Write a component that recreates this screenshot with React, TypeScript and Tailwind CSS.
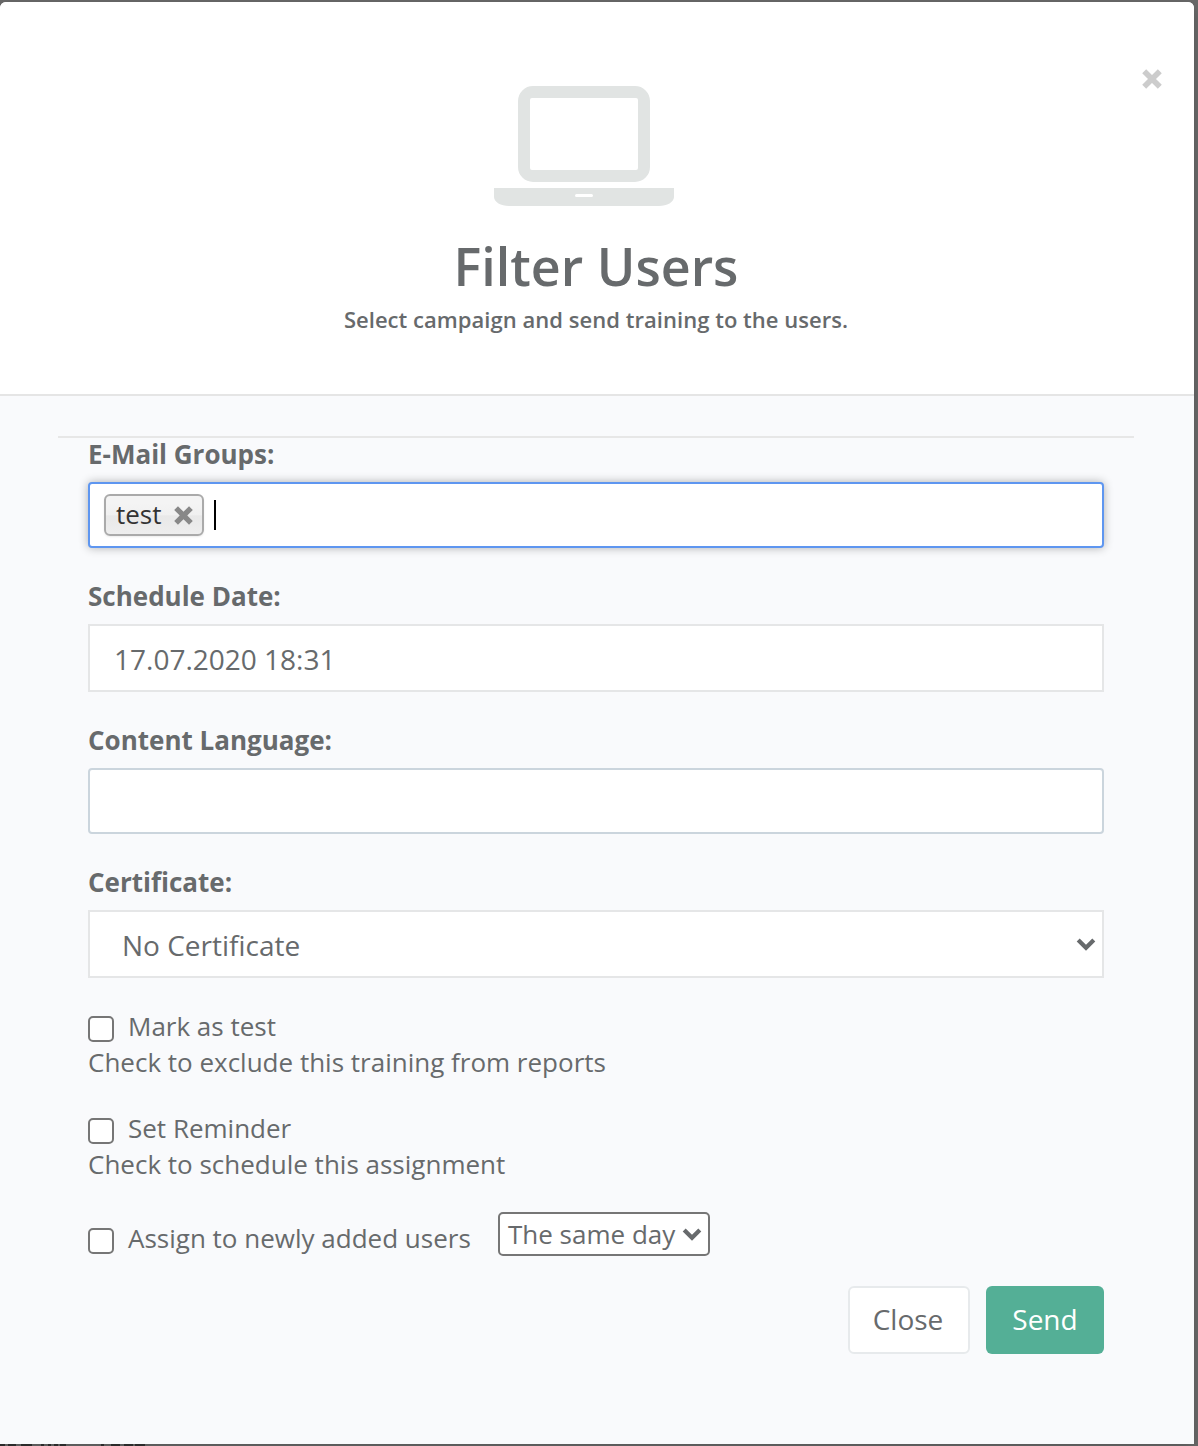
import type { ReactNode } from 'react';

function Cross({ className }: { className: string }) {
  return (
    <svg viewBox="0 0 20 20" className={className} fill="none" stroke="currentColor" strokeWidth="5.6">
      <path d="M2.2 2.2 17.8 17.8M17.8 2.2 2.2 17.8" />
    </svg>
  );
}

function Chevron() {
  return (
    <svg viewBox="0 0 20 14" className="h-[14px] w-5 shrink-0" fill="none" stroke="currentColor" strokeWidth="4.2">
      <path d="M2.2 2.9 10 10.7 17.8 2.9" />
    </svg>
  );
}

function Laptop() {
  return (
    <svg viewBox="0 0 180 120" className="h-[120px] w-[180px] text-[#e1e4e3]" fill="currentColor">
      <path
        fillRule="evenodd"
        d="M39 0H141A15 15 0 0 1 156 15V81A15 15 0 0 1 141 96H39A15 15 0 0 1 24 81V15A15 15 0 0 1 39 0ZM38 12A2 2 0 0 0 36 14V82A2 2 0 0 0 38 84H142A2 2 0 0 0 144 82V14A2 2 0 0 0 142 12Z"
      />
      <path
        fillRule="evenodd"
        d="M0 102H180V111C180 116 173 120 165 120H15C7 120 0 116 0 111ZM82.500 108A1.500 1.500 0 0 0 82.500 111H97.500A1.500 1.500 0 0 0 97.500 108Z"
      />
    </svg>
  );
}

function Label({ children, className }: { children: ReactNode; className: string }) {
  return <div className={`h-9 font-bold leading-9 ${className}`}>{children}</div>;
}

function CheckRow({ children }: { children: ReactNode }) {
  return (
    <label className="flex h-9 items-start leading-9">
      <span className="mt-2 mr-[14px] size-[26px] shrink-0 rounded-[5px] border-2 border-[#767676] bg-white" />
      {children}
    </label>
  );
}

const backdropMarks = [
  [0, 5], [8, 8], [21, 11], [41, 3], [48, 3], [54, 4], [60, 6],
  [101, 3], [111, 9], [124, 9], [135, 10],
];

export default function App() {
  return (
    <div className="relative h-[1446px] w-[1198px] overflow-hidden bg-[#6a6a6a] pt-[2px] font-['Open_Sans',sans-serif] text-[26px] text-[#676a6c]">
      <div className="h-[1442px] w-[1194px] overflow-hidden rounded-t-[6px] bg-[#f9fafc] shadow-[0_4px_16px_rgba(0,0,0,0.2)]">
        <header className="relative flex h-[394px] flex-col items-center border-b-2 border-[#e5e5e5] bg-white pt-[84px] pr-[2px]">
          <div className="-ml-6">
            <Laptop />
          </div>
          <h1 className="mt-[30px] h-[60px] text-[52px] leading-[60px] font-semibold">Filter Users</h1>
          <p className="mt-[7px] h-8 text-[22px] leading-8 font-semibold tracking-[0.035px]">Select campaign and send training to the users.</p>
          <button className="absolute top-[67px] right-[32px] text-[#cccccc]">
            <Cross className="size-5" />
          </button>
        </header>

        <main className="pt-10 pr-[60px] pl-[58px]">
          <hr className="border-t-2 border-[#e7e7e7]" />
          <div className="px-[30px]">
            <Label className="-mt-[2px]">E-Mail Groups:</Label>
            <div className="mt-[10px] flex h-[66px] items-center rounded-[4px] border-2 border-[#5e96f0] bg-white px-[14px] shadow-[0_0_10px_rgba(0,0,0,0.3)]">
              <span className="flex h-[42px] w-[100px] items-center justify-between rounded-[6px] border-2 border-[#aaaaaa] bg-[linear-gradient(#f4f4f4_20%,#f0f0f0_50%,#e8e8e8_52%,#eeeeee)] pr-[9.5px] pl-[10px] leading-9 text-[#333333] shadow-[0_1px_2px_rgba(0,0,0,0.08)]">
                <span className="-mt-[2px]">test</span>
                <Cross className="size-[19px] text-[#888888]" />
              </span>
              <span className="ml-[10px] h-[30px] w-[2px] bg-black" />
            </div>

            <Label className="mt-[30px]">Schedule Date:</Label>
            <div className="mt-[10px] flex h-[68px] items-center border-2 border-[#e5e6e7] bg-white px-6 pt-[2px] text-[28px]">
              17.07.2020 18:31
            </div>

            <Label className="mt-[30px]">Content Language:</Label>
            <div className="mt-[10px] h-[66px] rounded-[4px] border-2 border-[#cbd5dd] bg-white" />

            <Label className="mt-[30px]">Certificate:</Label>
            <div className="mt-[10px] flex h-[68px] items-center justify-between border-2 border-[#e5e6e7] bg-white pr-[6px] pl-8 text-[28px]">
              <span className="pt-[2px]">No Certificate</span>
              <Chevron />
            </div>

            <div className="mt-[30px]">
              <CheckRow>Mark as test</CheckRow>
              <p className="h-9 leading-9">Check to exclude this training from reports</p>
            </div>
            <div className="mt-[30px]">
              <CheckRow>Set Reminder</CheckRow>
              <p className="h-9 leading-9">Check to schedule this assignment</p>
            </div>
            <div className="mt-[30px] flex h-11">
              <div className="w-[410px] pt-2">
                <CheckRow>Assign to newly added users</CheckRow>
              </div>
              <div className="flex h-11 w-[212px] items-center justify-between rounded-[5px] border-2 border-[#767676] bg-white pr-[6px] pl-2 whitespace-nowrap">
                The same day
                <Chevron />
              </div>
            </div>

            <div className="mt-[30px] flex justify-end gap-4 text-[28px]">
              <button className="h-[68px] w-[122px] rounded-[6px] border-2 border-[#e7eaec] bg-white pr-[2px] pb-[2px]">Close</button>
              <button className="h-[68px] w-[118px] rounded-[6px] bg-[#54af96] pb-[2px] text-white">Send</button>
            </div>
          </div>
        </main>
      </div>
      <svg viewBox="0 0 200 2" className="h-[2px] w-[200px] text-[#2b2b2b]" fill="currentColor">
        {backdropMarks.map(([x, w]) => (
          <rect key={x} x={x} width={w} height="2" />
        ))}
      </svg>
    </div>
  );
}
